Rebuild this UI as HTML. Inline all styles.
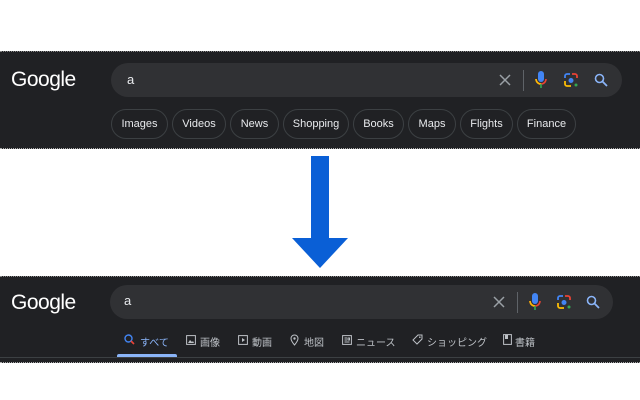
<!DOCTYPE html>
<html><head><meta charset="utf-8"><style>
*{margin:0;padding:0;box-sizing:border-box}
body{width:640px;height:400px;background:#fff;position:relative;overflow:hidden;font-family:"Liberation Sans","Noto Sans CJK JP",sans-serif}
.panel{position:absolute;left:0;width:640px;background:#202124;border-top:1px dotted #888;border-bottom:1px dotted #aaa}
.logo{position:absolute;color:#fff;font-size:21px;letter-spacing:-0.5px}
.box{position:absolute;background:#303134;border-radius:18px}
.q{position:absolute;color:#e8eaed;font-size:13px}
.chip{position:absolute;top:109px;height:30px;border:1px solid #3c4043;border-radius:15px;color:#e8eaed;font-size:11px;line-height:28px;text-align:center}
.t{position:absolute;top:334px;color:#bdc1c6;font-size:10px;white-space:nowrap}
svg{position:absolute}
</style></head><body>
<div class="panel" style="top:51px;height:98px"></div>
<div class="logo" style="left:11px;top:68px">Google</div>
<div class="box" style="left:111px;top:63px;width:511px;height:34px"></div>
<div class="q" style="left:127px;top:72px">a</div>
<svg style="left:498px;top:73px" width="14" height="14" viewBox="0 0 14 14"><path d="M2 2L12 12M12 2L2 12" stroke="#9aa0a6" stroke-width="1.5"/></svg>
<div style="position:absolute;left:523px;top:70px;width:1px;height:21px;background:#5f6368"></div>
<svg style="left:534px;top:70px" width="14" height="20" viewBox="0 0 14 20"><rect x="4" y="1" width="6" height="11" rx="3" fill="#4285f4"/><path d="M2 9a5 5 0 0 0 10 0" stroke="#ea4335" stroke-width="1.6" fill="none"/><path d="M2 9a5 5 0 0 0 5 5" stroke="#fbbc05" stroke-width="1.6" fill="none"/><rect x="6.2" y="14" width="1.6" height="4" fill="#34a853"/></svg>
<svg style="left:563px;top:72px" width="16" height="16" viewBox="0 0 16 16"><path d="M2 6V4a2 2 0 0 1 2-2h3" stroke="#4285f4" stroke-width="1.8" fill="none"/><path d="M9 2h3a2 2 0 0 1 2 2v2" stroke="#ea4335" stroke-width="1.8" fill="none"/><path d="M2 9v3a2 2 0 0 0 2 2h4" stroke="#fbbc05" stroke-width="1.8" fill="none"/><circle cx="8" cy="8.5" r="2.5" fill="#4285f4"/><circle cx="13" cy="13" r="1.5" fill="#34a853"/></svg>
<svg style="left:594px;top:73px" width="14" height="14" viewBox="0 0 14 14"><circle cx="5.5" cy="5.5" r="4" stroke="#8ab4f8" stroke-width="1.6" fill="none"/><path d="M8.5 8.5L13 13" stroke="#8ab4f8" stroke-width="1.8"/></svg>
<div class="chip" style="left:111px;width:57px">Images</div>
<div class="chip" style="left:172px;width:54px">Videos</div>
<div class="chip" style="left:230px;width:49px">News</div>
<div class="chip" style="left:283px;width:66px">Shopping</div>
<div class="chip" style="left:353px;width:51px">Books</div>
<div class="chip" style="left:408px;width:48px">Maps</div>
<div class="chip" style="left:460px;width:53px">Flights</div>
<div class="chip" style="left:517px;width:59px">Finance</div>

<div style="position:absolute;left:311px;top:156px;width:18px;height:83px;background:#0a5fd6"></div>
<svg style="left:292px;top:238px" width="56" height="30" viewBox="0 0 56 30"><path d="M0 0H56L28 30Z" fill="#0a5fd6"/></svg>

<div class="panel" style="top:276px;height:87px"></div>
<div class="logo" style="left:11px;top:291px">Google</div>
<div class="box" style="left:110px;top:285px;width:503px;height:34px"></div>
<div class="q" style="left:124px;top:293px">a</div>
<svg style="left:492px;top:295px" width="14" height="14" viewBox="0 0 14 14"><path d="M2 2L12 12M12 2L2 12" stroke="#9aa0a6" stroke-width="1.5"/></svg>
<div style="position:absolute;left:517px;top:292px;width:1px;height:21px;background:#5f6368"></div>
<svg style="left:528px;top:292px" width="14" height="20" viewBox="0 0 14 20"><rect x="4" y="1" width="6" height="11" rx="3" fill="#4285f4"/><path d="M2 9a5 5 0 0 0 10 0" stroke="#ea4335" stroke-width="1.6" fill="none"/><path d="M2 9a5 5 0 0 0 5 5" stroke="#fbbc05" stroke-width="1.6" fill="none"/><rect x="6.2" y="14" width="1.6" height="4" fill="#34a853"/></svg>
<svg style="left:556px;top:294px" width="16" height="16" viewBox="0 0 16 16"><path d="M2 6V4a2 2 0 0 1 2-2h3" stroke="#4285f4" stroke-width="1.8" fill="none"/><path d="M9 2h3a2 2 0 0 1 2 2v2" stroke="#ea4335" stroke-width="1.8" fill="none"/><path d="M2 9v3a2 2 0 0 0 2 2h4" stroke="#fbbc05" stroke-width="1.8" fill="none"/><circle cx="8" cy="8.5" r="2.5" fill="#4285f4"/><circle cx="13" cy="13" r="1.5" fill="#34a853"/></svg>
<svg style="left:586px;top:295px" width="14" height="14" viewBox="0 0 14 14"><circle cx="5.5" cy="5.5" r="4" stroke="#8ab4f8" stroke-width="1.6" fill="none"/><path d="M8.5 8.5L13 13" stroke="#8ab4f8" stroke-width="1.8"/></svg>

<svg style="left:124px;top:334px" width="11" height="11" viewBox="0 0 11 11"><circle cx="4.5" cy="4.5" r="3.5" stroke="#4285f4" stroke-width="1.4" fill="none"/><path d="M7 7L10 10" stroke="#ea4335" stroke-width="1.6"/></svg>
<div class="t" style="left:140px;color:#8ab4f8">すべて</div>
<svg style="left:186px;top:335px" width="10" height="10" viewBox="0 0 10 10"><rect x="0.6" y="0.6" width="8.8" height="8.8" stroke="#bdc1c6" fill="none"/><path d="M2 8L4 5L6 7L7 6L8 8Z" fill="#bdc1c6"/></svg>
<div class="t" style="left:200px">画像</div>
<svg style="left:238px;top:335px" width="10" height="10" viewBox="0 0 10 10"><rect x="0.6" y="0.6" width="8.8" height="8.8" stroke="#bdc1c6" fill="none"/><path d="M4 3L7 5L4 7Z" fill="#bdc1c6"/></svg>
<div class="t" style="left:252px">動画</div>
<svg style="left:290px;top:334px" width="9" height="12" viewBox="0 0 9 12"><path d="M4.5 11C2 8 1 6 1 4.5a3.5 3.5 0 0 1 7 0C8 6 7 8 4.5 11Z" stroke="#bdc1c6" fill="none"/><circle cx="4.5" cy="4.5" r="1.2" fill="#bdc1c6"/></svg>
<div class="t" style="left:304px">地図</div>
<svg style="left:342px;top:335px" width="10" height="10" viewBox="0 0 10 10"><rect x="0.6" y="0.6" width="8.8" height="8.8" stroke="#bdc1c6" fill="none"/><path d="M2.5 3H5M2.5 5H5M2.5 7H7.5M6 3H7.5V5H6Z" stroke="#bdc1c6"/></svg>
<div class="t" style="left:356px">ニュース</div>
<svg style="left:412px;top:334px" width="11" height="11" viewBox="0 0 11 11"><path d="M6 1H10V5L5 10L1 6Z" stroke="#bdc1c6" fill="none"/><circle cx="7.8" cy="3.2" r="0.8" fill="#bdc1c6"/></svg>
<div class="t" style="left:427px">ショッピング</div>
<svg style="left:503px;top:334px" width="9" height="11" viewBox="0 0 9 11"><rect x="0.6" y="0.6" width="7.8" height="9.8" stroke="#bdc1c6" fill="none"/><rect x="2" y="1" width="3" height="4" fill="#bdc1c6"/></svg>
<div class="t" style="left:515px">書籍</div>
<div style="position:absolute;left:117px;top:354px;width:60px;height:3px;background:#8ab4f8;border-radius:2px 2px 0 0"></div>
<div style="position:absolute;left:0;top:357px;width:640px;height:1px;background:#3c4043"></div>
</body></html>
